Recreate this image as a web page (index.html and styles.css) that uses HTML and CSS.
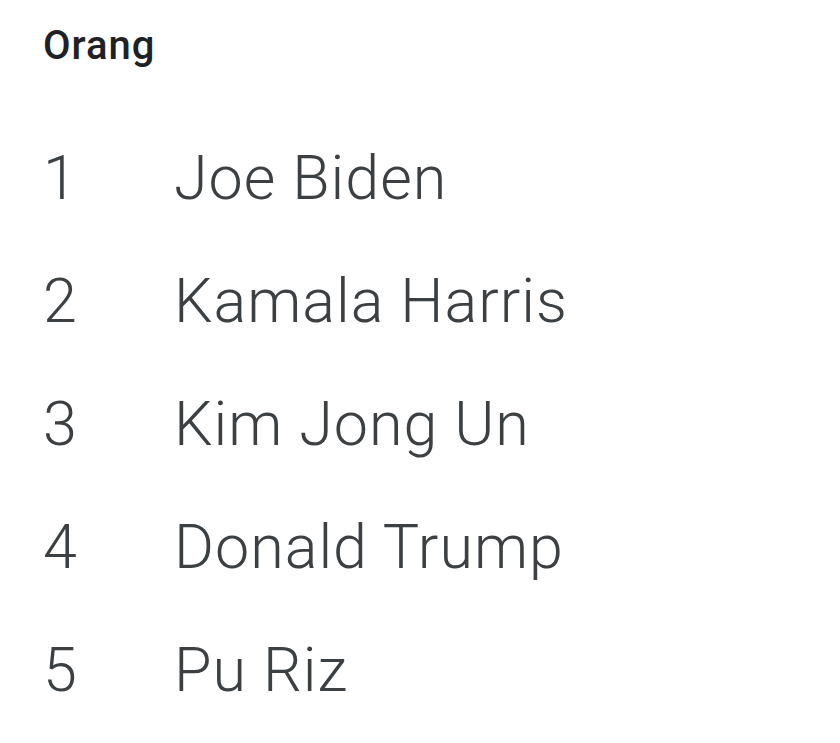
FILE: index.html
```html
<!DOCTYPE html>
<html lang="id">
<head>
<meta charset="utf-8">
<title>Orang</title>
<link rel="stylesheet" href="styles.css">
</head>
<body>
<section class="panel">
  <h2 class="title">Orang</h2>
  <ol class="list">
    <li class="row"><span class="num">1</span><span class="name">Joe Biden</span></li>
    <li class="row"><span class="num">2</span><span class="name">Kamala Harris</span></li>
    <li class="row"><span class="num">3</span><span class="name">Kim Jong Un</span></li>
    <li class="row"><span class="num">4</span><span class="name">Donald Trump</span></li>
    <li class="row"><span class="num">5</span><span class="name">Pu Riz</span></li>
  </ol>
</section>
</body>
</html>
```
FILE: styles.css
```css
html, body {
  margin: 0;
  padding: 0;
  background: #ffffff;
}
body {
  font-family: Roboto, "Noto Sans", sans-serif;
}
.panel {
  padding: 22px 0 0 43px;
}
.title {
  margin: 0;
  font-size: 40px;
  line-height: 48px;
  font-weight: 500;
  letter-spacing: 1px;
  color: #202124;
}
.list {
  list-style: none;
  margin: 47px 0 0 0;
  padding: 0;
}
.row {
  display: grid;
  grid-template-columns: 131px 1fr;
  font-size: 61px;
  line-height: 123px;
  font-weight: 300;
  letter-spacing: 1px;
  color: #3c4043;
}
```
